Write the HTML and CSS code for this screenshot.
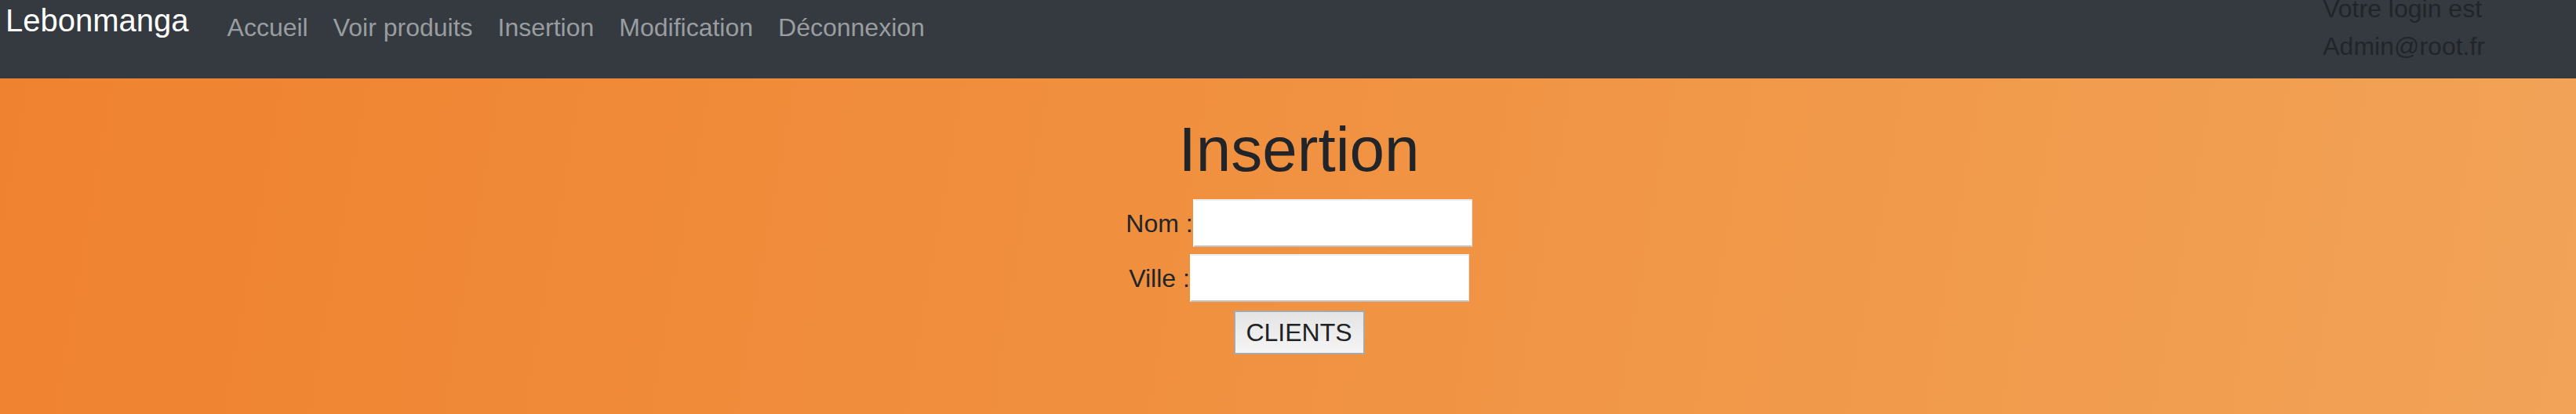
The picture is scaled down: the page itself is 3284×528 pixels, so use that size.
FILE: index.html
```html
<!DOCTYPE html>
<html lang="fr">
<head>
<meta charset="utf-8">
<title>Lebonmanga - Insertion</title>
<link rel="stylesheet" href="styles.css">
</head>
<body>
<nav class="navbar">
  <a class="brand" href="#">Lebonmanga</a>
  <ul class="nav-links">
    <li><a class="nav-link" href="#">Accueil</a></li>
    <li><a class="nav-link" href="#">Voir produits</a></li>
    <li><a class="nav-link" href="#">Insertion</a></li>
    <li><a class="nav-link" href="#">Modification</a></li>
    <li><a class="nav-link" href="#">Déconnexion</a></li>
  </ul>
  <div class="login-info">Votre login est<br>Admin@root.fr</div>
</nav>
<main class="content">
  <h1 class="title">Insertion</h1>
  <form class="form">
    <div class="form-row"><label class="label" for="nom">Nom :</label><input class="field" id="nom" type="text"></div>
    <div class="form-row"><label class="label" for="ville">Ville :</label><input class="field" id="ville" type="text"></div>
    <button class="btn" type="button">CLIENTS</button>
  </form>
</main>
</body>
</html>
```

FILE: styles.css
```css
html, body {
  margin: 0;
  padding: 0;
  height: 100%;
}

body {
  font-family: "Liberation Sans", Arial, sans-serif;
  color: #212529;
  background: linear-gradient(100deg, #ef8230 0%, #f0903f 45%, #f2a357 100%);
  overflow: hidden;
}

.navbar {
  display: flex;
  align-items: flex-start;
  height: 100px;
  background: #343a40;
  padding-left: 7px;
  box-sizing: border-box;
}

.brand {
  color: #ffffff;
  text-decoration: none;
  font-size: 40px;
  line-height: 48px;
  margin-top: 2px;
  margin-right: 33px;
}

.nav-links {
  display: flex;
  list-style: none;
  margin: 11px 0 0 0;
  padding: 0;
}

.nav-link {
  display: block;
  padding: 0 16px;
  font-size: 32px;
  line-height: 48px;
  color: #9a9da0;
  text-decoration: none;
}

.login-info {
  margin-left: auto;
  margin-right: 116px;
  margin-top: -13px;
  font-size: 32px;
  line-height: 48px;
  color: #212529;
  white-space: nowrap;
}

.content {
  padding-left: 28px;
  display: flex;
  flex-direction: column;
  align-items: center;
}

.title {
  margin: 43px 0 0 0;
  font-size: 80px;
  font-weight: 500;
  line-height: 96px;
  color: #212529;
}

.form {
  margin-top: 15px;
  display: flex;
  flex-direction: column;
  align-items: center;
  gap: 9px;
}

.form-row {
  display: flex;
  align-items: center;
  height: 61px;
}

.label {
  font-size: 32px;
  line-height: 48px;
  color: #212529;
  white-space: pre;
}

.field {
  box-sizing: border-box;
  width: 356px;
  height: 61px;
  margin: 0;
  background: #ffffff;
  border-style: solid;
  border-width: 2px 1px 2px 2px;
  border-color: rgba(0, 0, 0, 0.07) #e6e6e6 #c2c2c2 rgba(255, 255, 255, 0.7);
  font-size: 32px;
}

.btn {
  margin-top: 2px;
  box-sizing: border-box;
  width: 167px;
  height: 56px;
  padding: 0;
  border: 2px solid #a9a9a9;
  background: linear-gradient(#e4e4e4, #f5f5f5);
  font-family: "Liberation Sans", Arial, sans-serif;
  font-size: 32px;
  color: #222222;
}
```
